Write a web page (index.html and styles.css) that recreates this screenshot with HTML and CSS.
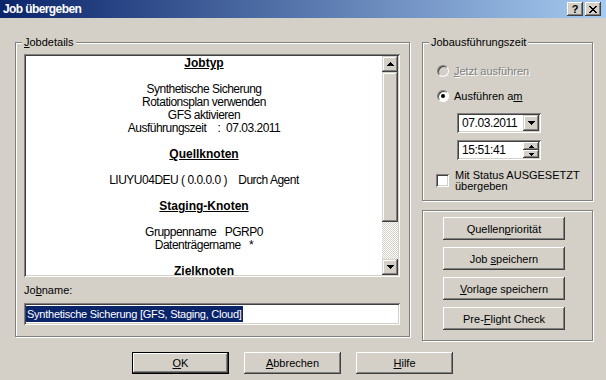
FILE: index.html
```html
<!DOCTYPE html>
<html lang="de">
<head>
    <meta charset="UTF-8">
    <title>Job übergeben</title>
    <link rel="stylesheet" href="styles.css">
</head>
<body>
<div class="window">
    <div class="titlebar">
        <span class="title">Job übergeben</span>
        <span class="caption-btn">?</span>
        <span class="caption-btn">
            <svg width="8" height="7" viewBox="0 0 8 7" shape-rendering="crispEdges"><path d="M0 0h2v1h1v1h2v-1h1v-1h2v1h-1v1h-1v1h-1v1h1v1h1v1h1v1h-2v-1h-1v-1h-2v1h-1v1h-2v-1h1v-1h1v-1h1v-1h-1v-1h-1v-1h-1z" fill="#000"/></svg>
        </span>
    </div>

    <div class="client">
        <div class="main">
            <div class="group details">
                <span class="group-label"><u>J</u>obdetails</span>
                <div class="summary">
                    <div class="summary-text">
                        <p class="head">Jobtyp</p>
                        <p class="gap">Synthetische Sicherung</p>
                        <p>Rotationsplan verwenden</p>
                        <p>GFS aktivieren</p>
                        <p>Ausführungszeit    :  07.03.2011</p>
                        <p class="head gap">Quellknoten</p>
                        <p class="gap">LIUYU04DEU ( 0.0.0.0 )    Durch Agent</p>
                        <p class="head gap">Staging-Knoten</p>
                        <p class="gap">Gruppenname   PGRP0</p>
                        <p>Datenträgername   *</p>
                        <p class="head gap">Zielknoten</p>
                    </div>
                    <div class="scrollbar">
                        <div class="sb-btn">
                            <svg width="7" height="4" viewBox="0 0 7 4" shape-rendering="crispEdges"><path d="M3 0h1v1h1v1h1v1h1v1h-7v-1h1v-1h1v-1h1z" fill="#000"/></svg>
                        </div>
                        <div class="sb-thumb"></div>
                        <div class="sb-track"></div>
                        <div class="sb-btn">
                            <svg width="7" height="4" viewBox="0 0 7 4" shape-rendering="crispEdges"><path d="M0 0h7v1h-1v1h-1v1h-1v1h-1v-1h-1v-1h-1v-1h-1z" fill="#000"/></svg>
                        </div>
                    </div>
                </div>
                <div class="field-label">Jo<u>b</u>name:</div>
                <div class="field jobname"><span class="selected">Synthetische Sicherung [GFS, Staging, Cloud]</span></div>
            </div>

            <div class="side">
                <div class="group schedule">
                    <span class="group-label">Jobausführungszeit</span>
                    <div class="option disabled">
                        <span class="radio"></span>
                        <span><u>J</u>etzt ausführen</span>
                    </div>
                    <div class="option second">
                        <span class="radio checked"></span>
                        <span>Ausführen a<u>m</u></span>
                    </div>
                    <div class="field combo">
                        <span class="field-value">07.03.2011</span>
                        <span class="drop-btn">
                            <svg width="7" height="4" viewBox="0 0 7 4" shape-rendering="crispEdges"><path d="M0 0h7v1h-1v1h-1v1h-1v1h-1v-1h-1v-1h-1v-1h-1z" fill="#000"/></svg>
                        </span>
                    </div>
                    <div class="field spin">
                        <span class="field-value">15:51:41</span>
                        <span class="spin-btns">
                            <span class="spin-btn">
                                <svg width="5" height="3" viewBox="0 0 5 3" shape-rendering="crispEdges"><path d="M2 0h1v1h1v1h1v1h-5v-1h1v-1h1z" fill="#000"/></svg>
                            </span>
                            <span class="spin-btn">
                                <svg width="5" height="3" viewBox="0 0 5 3" shape-rendering="crispEdges"><path d="M0 0h5v1h-1v1h-1v1h-1v-1h-1v-1h-1z" fill="#000"/></svg>
                            </span>
                        </span>
                    </div>
                    <div class="check-row">
                        <span class="checkbox"></span>
                        <span>Mit Status AUSGESETZT<br>übergeben</span>
                    </div>
                </div>

                <div class="group actions">
                    <button class="btn">Quellen<u>p</u>riorität</button>
                    <button class="btn">Job <u>s</u>peichern</button>
                    <button class="btn"><u>V</u>orlage speichern</button>
                    <button class="btn">Pre-<u>F</u>light Check</button>
                </div>
            </div>
        </div>

        <div class="footer">
            <button class="btn default"><u>O</u>K</button>
            <button class="btn"><u>A</u>bbrechen</button>
            <button class="btn"><u>H</u>ilfe</button>
        </div>
    </div>
</div>
</body>
</html>
```

FILE: styles.css
```css
* {
    box-sizing: border-box;
}
body {
    margin: 0;
    background: #d4d0c8;
    font-family: "Liberation Sans", Arial, sans-serif;
    font-size: 11px;
    color: #000;
}
.window {
    width: 606px;
    height: 380px;
    overflow: hidden;
}

/* title bar */
.titlebar {
    height: 18px;
    display: flex;
    align-items: center;
    padding: 0 5px 0 3px;
    background: linear-gradient(to right, #0a246a, #a6caf0);
}
.title {
    flex: 1;
    color: #fff;
    font-weight: bold;
    font-size: 12px;
    letter-spacing: -0.6px;
}
.caption-btn {
    width: 16px;
    height: 14px;
    margin-left: 2px;
    display: flex;
    align-items: center;
    justify-content: center;
    background: #d4d0c8;
    font-weight: bold;
    font-size: 11px;
    box-shadow: inset -1px -1px #404040, inset 1px 1px #fff, inset -2px -2px #808080;
}

/* layout */
.client {
    padding-top: 24px;
}
.main {
    display: flex;
    gap: 12px;
    padding-left: 15px;
}
.group {
    position: relative;
    border: 1px solid #808080;
    box-shadow: inset 1px 1px #fff, 1px 1px #fff;
}
.group-label {
    position: absolute;
    top: -7px;
    left: 6px;
    padding: 0 2px;
    line-height: 13px;
    background: #d4d0c8;
}

/* job details */
.details {
    width: 395px;
    height: 295px;
    padding: 11px 0 0 8px;
}
.summary {
    display: flex;
    width: 376px;
    height: 223px;
    padding: 2px;
    background: #fff;
    box-shadow: inset 1px 1px #808080, inset -1px -1px #fff, inset 2px 2px #404040, inset -2px -2px #d4d0c8;
}
.summary-text {
    flex: 1;
    overflow: hidden;
    padding-top: 1px;
    text-align: center;
    font-size: 12px;
    line-height: 13px;
    letter-spacing: -0.5px;
}
.summary-text p {
    margin: 0;
    white-space: pre;
}
.summary-text .head {
    font-weight: bold;
    text-decoration: underline;
    letter-spacing: 0;
}
.summary-text .gap {
    margin-top: 13px;
}
.scrollbar {
    width: 16px;
    display: flex;
    flex-direction: column;
}
.sb-btn {
    height: 16px;
    display: flex;
    align-items: center;
    justify-content: center;
    background: #d4d0c8;
    box-shadow: inset -1px -1px #404040, inset 1px 1px #d4d0c8, inset -2px -2px #808080, inset 2px 2px #fff;
}
.sb-thumb {
    height: 150px;
    background: #d4d0c8;
    box-shadow: inset -1px -1px #404040, inset 1px 1px #d4d0c8, inset -2px -2px #808080, inset 2px 2px #fff;
}
.sb-track {
    flex: 1;
    background-image: repeating-conic-gradient(#fff 0 25%, #d4d0c8 0 50%);
    background-size: 2px 2px;
}
.field-label {
    margin-top: 7px;
    line-height: 13px;
}
.field {
    background: #fff;
    box-shadow: inset 1px 1px #808080, inset -1px -1px #fff, inset 2px 2px #404040, inset -2px -2px #d4d0c8;
}
.jobname {
    width: 376px;
    height: 22px;
    margin-top: 6px;
    display: flex;
    align-items: center;
    padding: 0 2px;
}
.selected {
    background: #0a246a;
    color: #fff;
    line-height: 16px;
    padding: 0 1px;
    font-size: 11px;
    letter-spacing: -0.25px;
}

/* right side */
.side {
    width: 171px;
}
.schedule {
    height: 159px;
    padding: 21px 0 0 14px;
}
.option {
    display: flex;
    align-items: center;
    gap: 5px;
    height: 13px;
}
.option.second {
    margin-top: 12px;
}
.option.disabled {
    color: #808080;
    text-shadow: 1px 1px #fff;
}
.radio {
    width: 12px;
    height: 12px;
    display: flex;
    align-items: center;
    justify-content: center;
    border-radius: 50%;
    background: #fff;
    border: 1px solid;
    border-color: #808080 #fff #fff #808080;
    box-shadow: inset 1px 1px #404040;
}
.disabled .radio {
    background: #d4d0c8;
}
.radio.checked::after {
    content: "";
    width: 4px;
    height: 4px;
    border-radius: 50%;
    background: #000;
}
.combo,
.spin {
    width: 84px;
    height: 20px;
    margin-left: 20px;
    display: flex;
    align-items: center;
    padding: 2px;
}
.combo {
    margin-top: 11px;
}
.spin {
    margin-top: 7px;
}
.field-value {
    flex: 1;
    padding-left: 3px;
    font-size: 12px;
    letter-spacing: -0.4px;
}
.drop-btn {
    width: 16px;
    height: 16px;
    display: flex;
    align-items: center;
    justify-content: center;
    background: #d4d0c8;
    box-shadow: inset -1px -1px #404040, inset 1px 1px #d4d0c8, inset -2px -2px #808080, inset 2px 2px #fff;
}
.spin-btns {
    width: 16px;
    height: 16px;
    display: flex;
    flex-direction: column;
}
.spin-btn {
    height: 8px;
    display: flex;
    align-items: center;
    justify-content: center;
    background: #d4d0c8;
    box-shadow: inset -1px -1px #404040, inset 1px 1px #fff, inset -2px -2px #808080;
}
.check-row {
    display: flex;
    align-items: flex-start;
    gap: 6px;
    margin: 10px 0 0 -1px;
    line-height: 11px;
}
.checkbox {
    width: 13px;
    height: 13px;
    margin-top: 4px;
    flex: none;
    background: #fff;
    box-shadow: inset 1px 1px #808080, inset -1px -1px #fff, inset 2px 2px #404040, inset -2px -2px #d4d0c8;
}
.actions {
    height: 131px;
    margin-top: 9px;
    padding: 6px 0 0 20px;
    display: flex;
    flex-direction: column;
    gap: 7px;
}
.actions .btn {
    width: 122px;
    height: 23px;
}

/* buttons */
.btn {
    font: inherit;
    color: #000;
    background: #d4d0c8;
    border: none;
    padding: 0;
    box-shadow: inset -1px -1px #404040, inset 1px 1px #fff, inset -2px -2px #808080, inset 2px 2px #d4d0c8;
}
.btn.default {
    border: 1px solid #000;
}
.footer {
    display: flex;
    gap: 15px;
    margin-top: 11px;
    padding-left: 132px;
}
.footer .btn {
    width: 97px;
    height: 22px;
}
```
